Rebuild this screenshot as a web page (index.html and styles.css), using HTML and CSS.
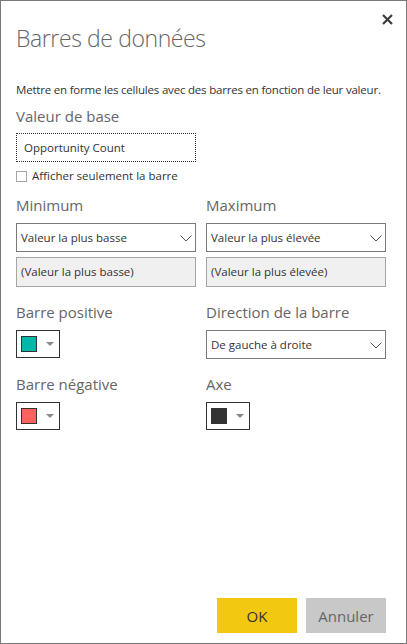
FILE: index.html
```html
<!DOCTYPE html>
<html lang="fr">
<head>
  <meta charset="UTF-8">
  <meta name="viewport" content="width=device-width, initial-scale=1.0">
  <title>Barres de données</title>
  <link rel="stylesheet" href="styles.css">
</head>
<body>
  <div class="dialog">
    <button class="close" aria-label="Fermer">
      <svg width="11" height="11" viewBox="0 0 11 11"><path d="M1 1 L10 10 M10 1 L1 10" stroke="#3c3c3c" stroke-width="2.2" fill="none"/></svg>
    </button>

    <h1 class="title">Barres de données</h1>
    <p class="desc">Mettre en forme les cellules avec des barres en fonction de leur valeur.</p>

    <div class="field">
      <div class="label">Valeur de base</div>
      <div class="input focused">Opportunity Count</div>
      <label class="check"><span class="box"></span>Afficher seulement la barre</label>
    </div>

    <div class="grid">
      <div class="cell">
        <div class="label">Minimum</div>
        <div class="select">Valeur la plus basse<svg class="chev" width="12" height="7" viewBox="0 0 12 7"><polyline points="0.5,0.5 6,6 11.5,0.5" fill="none" stroke="#555" stroke-width="1"/></svg></div>
        <div class="input disabled">(Valeur la plus basse)</div>
      </div>
      <div class="cell">
        <div class="label">Maximum</div>
        <div class="select">Valeur la plus élevée<svg class="chev" width="12" height="7" viewBox="0 0 12 7"><polyline points="0.5,0.5 6,6 11.5,0.5" fill="none" stroke="#555" stroke-width="1"/></svg></div>
        <div class="input disabled">(Valeur la plus élevée)</div>
      </div>

      <div class="cell row2">
        <div class="label">Barre positive</div>
        <div class="picker"><span class="swatch teal"></span><span class="tri"></span></div>
      </div>
      <div class="cell row2">
        <div class="label">Direction de la barre</div>
        <div class="select">De gauche à droite<svg class="chev" width="12" height="7" viewBox="0 0 12 7"><polyline points="0.5,0.5 6,6 11.5,0.5" fill="none" stroke="#555" stroke-width="1"/></svg></div>
      </div>

      <div class="cell row3">
        <div class="label">Barre négative</div>
        <div class="picker"><span class="swatch red"></span><span class="tri"></span></div>
      </div>
      <div class="cell row3">
        <div class="label">Axe</div>
        <div class="picker"><span class="swatch dark"></span><span class="tri"></span></div>
      </div>
    </div>

    <div class="footer">
      <button class="btn ok">OK</button>
      <button class="btn cancel">Annuler</button>
    </div>
  </div>
</body>
</html>
```

FILE: styles.css
```css
* { box-sizing: border-box; }
body { margin: 0; font-family: "Open Sans", "Noto Sans", sans-serif; color: #333; background: #fff; }

.dialog { position: relative; width: 407px; height: 644px; border: 1px solid #7a7a7a; padding: 21px 20px 10px 15px; display: flex; flex-direction: column; }
.close { position: absolute; top: 13px; right: 13px; border: 0; background: none; padding: 0; width: 11px; height: 11px; cursor: pointer; }
.close svg { display: block; }

.title { margin: 0; font-size: 23px; line-height: 32px; font-weight: 300; color: #666; letter-spacing: -0.4px; }
.desc { margin: 28px 0 0; font-size: 11.5px; line-height: 16px; color: #333; letter-spacing: -0.2px; white-space: nowrap; }

.field { margin-top: 8px; }
.label { font-size: 15px; line-height: 20px; color: #666; margin-bottom: 7px; }

.input { height: 29px; width: 180px; font-size: 11.5px; line-height: 27px; padding: 0 7px; border: 1px solid #8a8a8a; color: #333; }
.input.focused { border: 1px dotted #333; }
.input.disabled { background: #f0f0f0; border-color: #a6a6a6; padding: 0 4px; margin-top: 5px; height: 30px; line-height: 27px; }

.check { display: flex; align-items: center; gap: 5px; margin-top: 6px; font-size: 11.5px; line-height: 16px; color: #333; }
.check .box { width: 11px; height: 11px; border: 1px solid #a6a6a6; background: #fff; }

.grid { display: grid; grid-template-columns: 180px 180px; column-gap: 10px; margin-top: 11px; }
.cell.row2 { margin-top: 15px; }
.cell.row3 { margin-top: 15px; }
.cell .label { margin-bottom: 8px; }

.select { position: relative; height: 29px; width: 180px; border: 1px solid #7a7a7a; font-size: 11.5px; line-height: 27px; padding: 0 4px; color: #333; }
.chev { position: absolute; right: 3px; top: 11px; display: block; }

.picker { display: flex; align-items: center; width: 44px; height: 28px; border: 1px solid #333; padding: 0 0 0 4px; gap: 9px; }
.swatch { width: 16px; height: 16px; border: 1px solid #333; }
.swatch.teal { background: #01b8aa; }
.swatch.red { background: #fd625e; }
.swatch.dark { background: #333; }
.tri { width: 0; height: 0; border-left: 4px solid transparent; border-right: 4px solid transparent; border-top: 4px solid #8a8a8a; }

.footer { margin-top: auto; display: flex; justify-content: flex-end; gap: 9px; }
.btn { width: 80px; height: 35px; border: 0; font-family: inherit; font-size: 15px; cursor: pointer; }
.btn.ok { background: #f2c811; color: #333; }
.btn.cancel { background: #c8c8c8; color: #666; }
```
